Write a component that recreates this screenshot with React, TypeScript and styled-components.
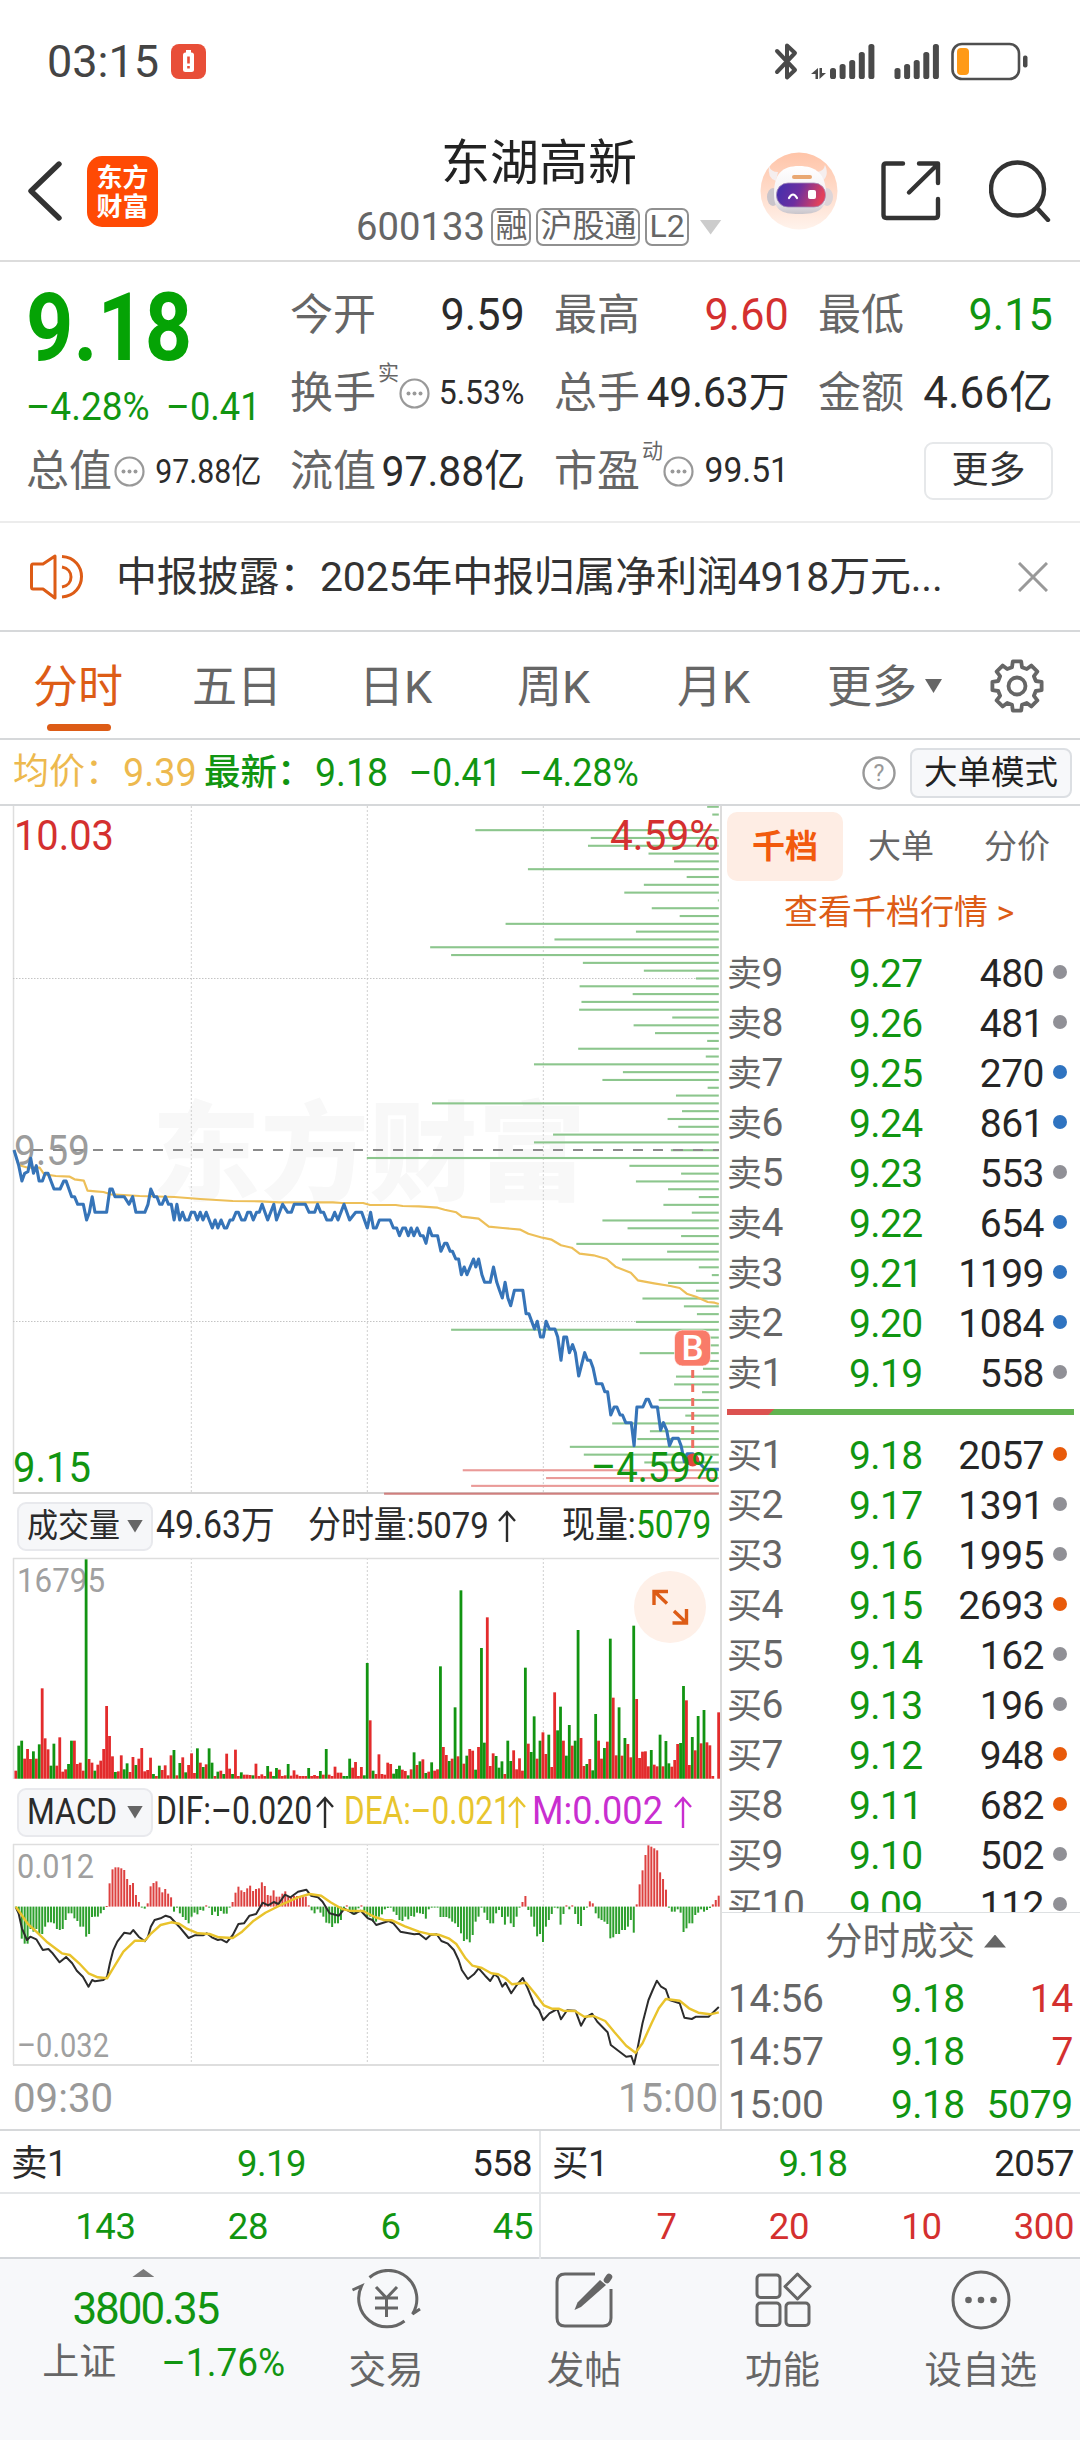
import React from 'react';
import styled, { createGlobalStyle } from 'styled-components';

const UP = '#d4302f';
const DOWN = '#119511';
const INK = '#2b2b2b';
const SUB = '#666666';
const ORANGE = '#dd5c16';
const LINE = '#d6d8da';

const Global = createGlobalStyle`
  * { box-sizing: border-box; }
  body {
    margin: 0;
    background: #fff;
    font-family: Roboto, "Noto Sans CJK SC", sans-serif;
    color: ${INK};
  }
  svg { display: block; flex: none; }
`;

const Page = styled.main`
  width: 1080px;
  height: 2440px;
  display: flex;
  flex-direction: column;
  overflow: hidden;
  background: #fff;
`;

/* A run of text narrowed horizontally inside a fixed-width slot. */
const Run = styled.span<{ $w?: number; $k?: number; $size?: number; $color?: string; $weight?: number; $end?: boolean }>`
  display: block;
  flex: none;
  width: ${(p) => (p.$w ? `${p.$w}px` : 'auto')};
  white-space: nowrap;
  line-height: 1.2;
  ${(p) => p.$size && `font-size: ${p.$size}px;`}
  ${(p) => p.$color && `color: ${p.$color};`}
  ${(p) => p.$weight && `font-weight: ${p.$weight};`}
  transform: scaleX(${(p) => p.$k ?? 1});
  transform-origin: ${(p) => (p.$end ? '100%' : '0')} 50%;
`;

/* ---------- status bar ---------- */

const StatusBar = styled.div`
  height: 120px;
  flex: none;
  padding: 3px 52px 0 47px;
  display: flex;
  align-items: center;
  justify-content: space-between;
`;
const StatusLeft = styled.div`
  display: flex;
  align-items: center;
  gap: 12px;
`;
const Clock = styled.span`
  font-size: 45px;
  line-height: 52px;
  color: #444;
  width: 112px;
`;

const SignalBars = ({ x }: { x: number }) => (
  <>
    {[67, 63, 59, 51, 43].map((top, i) => (
      <rect key={top} x={x + i * 9.6} y={top} width="6" height={78 - top} rx="2.6" fill="#4a4a4a" />
    ))}
  </>
);

const StatusIcons = () => (
  <svg width="254" height="40" viewBox="774 41 254 40">
    <path d="M777 50 L795 69 L787 76.500 V44.500 L795 52 L777 71" fill="none" stroke="#4a4a4a" strokeWidth="4" strokeLinejoin="round" strokeLinecap="round" />
    <path d="M811 73 L818 67 V78 H815.500 V73 Z M826 72 L819.500 78 V67 H822 V72 Z" fill="#4a4a4a" />
    <SignalBars x={830} />
    <SignalBars x={894.5} />
    <rect x="952.500" y="43" width="66.500" height="35" rx="9.500" fill="none" stroke="#4f4f4f" strokeWidth="2.600" />
    <rect x="957" y="47" width="12" height="27" rx="4" fill="#ff9a17" />
    <rect x="1023" y="54.500" width="4.500" height="12" rx="2" fill="#4a4a4a" />
  </svg>
);

/* ---------- header ---------- */

const Header = styled.header`
  height: 142px;
  flex: none;
  display: grid;
  grid-template-columns: 1fr auto 1fr;
  align-items: center;
  border-bottom: 2px solid #dcdcdc;
  padding: 2px 29px 0 27px;
`;
const HeaderLeft = styled.div`
  display: flex;
  align-items: center;
  gap: 24px;
`;
const Logo = styled.div`
  width: 71px;
  height: 71px;
  border-radius: 15px;
  background: #ff4a04;
  color: #fff;
  font-family: "Noto Sans CJK SC", sans-serif;
  font-weight: 700;
  font-size: 26px;
  line-height: 29px;
  text-align: center;
  padding-top: 5px;
`;
const TitleBlock = styled.div`
  display: flex;
  flex-direction: column;
  align-items: center;
  padding-top: 8px;
`;
const StockName = styled.h1`
  margin: 0;
  font-size: 49px;
  line-height: 64px;
  font-weight: 400;
  color: #222;
`;
const CodeRow = styled.div`
  display: flex;
  align-items: center;
  gap: 5px;
  height: 62px;
  color: ${SUB};
`;
const Tag = styled.span`
  height: 38px;
  border: 2px solid #909090;
  border-radius: 7px;
  padding: 0 2px;
  font-size: 32px;
  line-height: 33px;
`;
const HeaderRight = styled.div`
  display: flex;
  justify-content: flex-end;
  align-items: center;
`;

const Robot = () => (
  <svg width="78" height="78" viewBox="0 0 78 78">
    <defs>
      <linearGradient id="halo" x1="0" y1="0" x2="0" y2="1">
        <stop offset="0" stopColor="#ffc4a8" />
        <stop offset="1" stopColor="#fff3ec" />
      </linearGradient>
      <linearGradient id="visor" x1="0" y1="0" x2="1" y2="0.2">
        <stop offset="0" stopColor="#3f2fae" />
        <stop offset="0.5" stopColor="#6c2fa0" />
        <stop offset="1" stopColor="#e2415c" />
      </linearGradient>
      <linearGradient id="shell" x1="0" y1="0" x2="0" y2="1">
        <stop offset="0" stopColor="#ffffff" />
        <stop offset="0.7" stopColor="#f1eef1" />
        <stop offset="1" stopColor="#c9c5cb" />
      </linearGradient>
    </defs>
    <circle cx="39" cy="39" r="38.500" fill="url(#halo)" />
    <path d="M9 14 Q11 20 18 20 L16 29 Q7 26 9 14 Z M65 13 Q64 19 57 20 L61 30 Q70 24 65 13 Z" fill="#f5eeee" />
    <ellipse cx="13" cy="45" rx="6" ry="9" fill="#c9c4ca" />
    <ellipse cx="67" cy="45" rx="6" ry="9" fill="#ddd5d8" />
    <path d="M14 42 C14 22 22 14 39 14 C56 14 66 22 66 42 C66 58 58 62 39 62 C21 62 14 58 14 42 Z" fill="url(#shell)" />
    <rect x="32" y="23" width="20" height="4" rx="2" fill="#e9a873" />
    <rect x="16.500" y="31" width="49" height="24" rx="11.500" fill="url(#visor)" stroke="#a58bb9" strokeWidth="0.800" />
    <path d="M29 46 Q33 39 37 46" fill="none" stroke="#fff" strokeWidth="2.200" strokeLinecap="round" />
    <rect x="48" y="38" width="8" height="9" rx="2" fill="#fff" />
  </svg>
);

const ShareSvg = styled.svg`
  margin-left: 43px;
`;
const ShareIcon = () => (
  <ShareSvg width="60" height="60" viewBox="0 0 60 60">
    <path d="M22 2.500 H5 Q2.500 2.500 2.500 5 V54 Q2.500 57 5.500 57 H54 Q57 57 57 54 V38 M38 2.500 H57 V22 M56 4 L28 31.500" fill="none" stroke="#333" strokeWidth="4.400" strokeLinecap="round" strokeLinejoin="round" />
  </ShareSvg>
);

const SearchSvg = styled.svg`
  margin-left: 48px;
`;
const SearchIcon = () => (
  <SearchSvg width="62" height="62" viewBox="0 0 62 62">
    <circle cx="28.500" cy="29" r="26.500" fill="none" stroke="#333" strokeWidth="4.400" />
    <path d="M48 48 L59 60" stroke="#333" strokeWidth="4.400" strokeLinecap="round" />
  </SearchSvg>
);

/* ---------- quote ---------- */

const Quote = styled.section`
  flex: none;
  height: 261px;
  padding: 14px 28px 0 26px;
  display: grid;
  grid-template-columns: repeat(4, 235px);
  grid-template-rows: repeat(3, 78px);
  column-gap: 29px;
  border-bottom: 2px solid #ececec;
`;
const LastPrice = styled.div`
  grid-row: 1 / span 2;
  display: flex;
  flex-direction: column;
  color: ${DOWN};
`;
const BigPrice = styled.div`
  height: 108px;
  padding-top: 2px;
  font-size: 95px;
  line-height: 100px;
  font-weight: 700;
  color: #05a305;
  transform: scaleX(0.87);
  transform-origin: 0 50%;
`;
const Changes = styled.div`
  display: flex;
  justify-content: space-between;
  align-items: center;
  height: 50px;
`;
const Stat = styled.div`
  display: flex;
  align-items: center;
  justify-content: space-between;
  font-size: 43px;
  line-height: 78px;
`;
const StatLabel = styled.div`
  display: flex;
  align-items: center;
  color: ${SUB};
  white-space: nowrap;
`;
const Sup = styled.sup`
  align-self: flex-start;
  font-size: 21px;
  line-height: 34px;
  margin: 2px -2px 0 2px;
  vertical-align: baseline;
`;
const StatValue = styled.div<{ $size: number; $color?: string; $k: number }>`
  font-size: ${(p) => p.$size}px;
  color: ${(p) => p.$color ?? INK};
  white-space: nowrap;
  transform: scaleX(${(p) => p.$k});
  transform-origin: 100% 50%;
  margin-left: -20px;
`;
const MoreCell = styled.div`
  display: flex;
  align-items: center;
  justify-content: flex-end;
`;
const MoreButton = styled.button`
  font: inherit;
  font-size: 37px;
  line-height: 50px;
  width: 129px;
  height: 58px;
  padding: 0;
  color: #333;
  background: #fff;
  border: 2px solid #e6e8ea;
  border-radius: 9px;
`;

const Dots = () => (
  <svg width="33" height="31" viewBox="-2 0 33 31">
    <circle cx="15.500" cy="15.500" r="14" fill="none" stroke="#999" strokeWidth="2.200" />
    <circle cx="9.500" cy="15.500" r="2" fill="#999" />
    <circle cx="15.500" cy="15.500" r="2" fill="#999" />
    <circle cx="21.500" cy="15.500" r="2" fill="#999" />
  </svg>
);

type StatInfo = { label: string; value: string; size: number; k?: number; color?: string; sup?: string; dots?: boolean };

const StatCell = ({ label, value, size, k = 0.96, color, sup, dots }: StatInfo) => (
  <Stat>
    <StatLabel>
      {label}
      {sup && <Sup>{sup}</Sup>}
      {dots && <Dots />}
    </StatLabel>
    <StatValue $size={size} $color={color} $k={k}>{value}</StatValue>
  </Stat>
);

/* ---------- notice ---------- */

const Notice = styled.div`
  flex: none;
  height: 109px;
  display: flex;
  align-items: center;
  padding: 0 32px 0 30px;
  border-bottom: 2px solid ${LINE};
`;
const NoticeText = styled.span`
  flex: 1;
  margin-left: 31px;
  font-size: 41px;
  line-height: 56px;
  letter-spacing: -0.2px;
  color: #333;
  white-space: nowrap;
`;

/* ---------- period tabs ---------- */

const Tabs = styled.nav`
  flex: none;
  height: 108px;
  position: relative;
  display: flex;
  align-items: center;
  padding: 2px 36px 0 33px;
  border-bottom: 2px solid ${LINE};
`;
const Tab = styled.div<{ $w: number; $active?: boolean }>`
  width: ${(p) => p.$w}px;
  height: 100%;
  display: flex;
  flex-direction: column;
  justify-content: center;
  padding-top: 3px;
  font-size: 45px;
  line-height: 60px;
  color: ${(p) => (p.$active ? ORANGE : SUB)};
`;
const Underline = styled.i`
  position: absolute;
  left: 47px;
  bottom: 7px;
  width: 64px;
  height: 7px;
  border-radius: 4px;
  background: ${ORANGE};
`;
const Caret = styled.i<{ $w: number; $h: number; $color?: string; $up?: boolean }>`
  flex: none;
  width: ${(p) => p.$w}px;
  height: ${(p) => p.$h}px;
  background: ${(p) => p.$color ?? SUB};
  clip-path: ${(p) => (p.$up ? 'polygon(50% 0, 100% 100%, 0 100%)' : 'polygon(0 0, 100% 0, 50% 100%)')};
`;
const CodeCaret = styled(Caret)`
  margin-left: 6px;
`;
const Gear = () => {
  const pts: string[] = [];
  for (let i = 0; i < 8; i++) {
    const a = (i * Math.PI) / 4 - Math.PI / 2;
    [[-0.26, 19.5], [-0.17, 25], [0.17, 25], [0.26, 19.5]].forEach(([d, r]) =>
      pts.push(`${(27 + r * Math.cos(a + d)).toFixed(1)},${(27 + r * Math.sin(a + d)).toFixed(1)}`));
  }
  return (
    <svg width="54" height="54" viewBox="0 0 54 54">
      <polygon points={pts.join(' ')} fill="none" stroke={SUB} strokeWidth="3.800" strokeLinejoin="round" />
      <circle cx="27" cy="27" r="8.500" fill="none" stroke={SUB} strokeWidth="3.800" />
    </svg>
  );
};

/* ---------- average line ---------- */

const Summary = styled.div`
  flex: none;
  height: 66px;
  display: flex;
  align-items: center;
  padding: 2px 8px 0 13px;
  border-bottom: 2px solid ${LINE};
`;
const ModeButton = styled.button`
  font: inherit;
  width: 162px;
  height: 50px;
  margin-left: 14px;
  padding: 0;
  font-size: 33.5px;
  line-height: 44px;
  color: #222;
  background: #f7f8fa;
  border: 2px solid #dcdfe3;
  border-radius: 8px;
`;
const Spacer = styled.div`
  flex: 1;
`;

/* ---------- charts ---------- */

const Board = styled.section`
  flex: none;
  height: 1325px;
  display: flex;
  border-bottom: 2px solid ${LINE};
`;
const ChartColumn = styled.div`
  width: 722px;
  flex: none;
  border-right: 2px solid #dcdcdc;
  display: flex;
  flex-direction: column;
`;
const Legend = styled.div`
  height: 62px;
  flex: none;
  display: flex;
  align-items: center;
  padding-left: 17px;
  font-size: 37px;
`;
const Picker = styled.div`
  flex: none;
  width: 136px;
  height: 49px;
  margin-right: 3px;
  padding: 0 8px 0 8px;
  display: flex;
  align-items: center;
  justify-content: space-between;
  background: #f6f7f9;
  border: 2px solid #e8e9ed;
  border-radius: 9px;
`;
const TimeAxis = styled.div`
  flex: 1;
  display: flex;
  align-items: center;
  justify-content: space-between;
  padding: 2px 2px 0 13px;
  font-size: 41px;
  color: #999;
`;

const SX = 730 / 1568;
const STEP = 6.29;
const RIGHT = 718.8;
const trace = (data: string, top: number) =>
  data.trim().split(/\s+/).map((p) => {
    const [x, y] = p.split(',').map(Number);
    return `${(x * SX).toFixed(1)},${(top + y / 3).toFixed(1)}`;
  }).join(' ');

const depth = `25 14 0 523 275 281 151 96 410 69 161 203 2 144 84 458 178 353 620 575 292 161 49 299 185 295 300 100 183 137 25
302 28 397 206 250 24 92 616 79 110 87 356 397 103 756 192 81 178 109 43 119 58 250 196 81 306 111 208 43 15 109 49 164 75 47
178 575 20 20 170 20 34 92 96 36 129 129 72 229 148 175 320 290 160 550 371 532 719`.split(/\s+/).map(Number);

const price = `30,30 40,75 47,123 53,100 60,95 66,55 72,100 78,77 84,123 91,123 97,100 103,100 116,147 129,147 137,123 142,123
154,170 160,170 167,193 179,193 186,240 192,217 198,170 204,217 229,217 236,147 241,147 247,170 267,170 277,193 285,170
292,217 311,217 318,193 324,147 331,170 337,170 343,193 348,193 355,170 362,193 368,193 374,240 380,193 386,240 392,217
398,240 405,240 411,217 418,217 424,240 430,217 436,240 443,217 456,264 462,240 468,264 475,240 482,264 487,264 494,240
500,240 507,217 512,217 519,240 526,240 532,217 538,217 544,240 551,217 557,217 563,193 575,240 588,193 594,240 607,193
618,217 626,217 632,193 656,193 664,217 676,217 682,193 689,217 695,217 702,240 712,240 719,217 726,240 739,193 751,240
764,217 777,217 789,264 796,217 802,264 808,264 815,240 838,240 845,264 852,264 858,287 865,264 871,264 877,287 883,264
889,287 896,264 903,287 909,287 915,310 922,264 928,287 940,287 947,334 955,310 960,310 967,334 972,334 979,357 985,357
991,404 997,381 1003,404 1017,357 1022,381 1028,357 1035,404 1041,427 1053,427 1060,381 1067,427 1073,451 1079,474
1085,427 1091,474 1097,497 1105,451 1123,451 1130,521 1136,521 1148,567 1154,544 1161,591 1167,591 1173,544 1180,567
1192,567 1198,591 1205,661 1211,591 1217,591 1223,638 1230,614 1236,638 1243,708 1256,638 1262,661 1268,661 1274,684
1281,731 1293,731 1299,755 1305,755 1312,825 1319,801 1325,801 1332,825 1337,825 1344,848 1356,848 1362,917 1368,801
1381,801 1388,778 1393,778 1400,801 1412,801 1419,871 1425,848 1432,871 1438,917 1445,895 1457,895 1463,917 1470,965
1476,941 1488,941 1500,965 1515,988 1544,988`;

const average = `30,30 40,75 60,83 85,83 95,103 120,108 150,110 160,118 180,122 188,152 205,154 222,156 238,163 265,165
300,168 375,171 430,177 500,183 560,184 600,187 715,187 735,189 780,189 795,195 850,195 865,198 900,199 940,203 955,209
980,217 992,230 1028,236 1050,260 1080,264 1118,269 1135,281 1165,293 1185,299 1205,316 1228,323 1245,341 1275,346
1303,357 1322,380 1355,398 1370,421 1405,430 1440,438 1460,444 1475,461 1495,470 1520,486 1535,488 1544,492`;

const volume = `r812 g737 g722 r776 r747 r777 g754 r776 g733 r565 r715 r748 g797 g731 r797 r712 r815 r808 g792 g722 r722 r792
r788 r812 g178 r777 r788 g812 r794 r782 r747 r618 r708 r769 g816 r814 r766 g808 g790 r816 r771 g795 r776 r744 r814 r810 r773
g822 r828 g797 r810 r796 r826 r766 g750 r826 g789 r772 g817 r795 r760 r819 g745 r788 g801 r793 g745 g788 r828 g815 r812 g822
r761 r806 g822 r749 r828 g817 r824 r824 r825 g826 r791 r828 r823 r828 g798 r815 g828 g804 r809 r828 r826 g792 r827 r811 r824
r828 r828 r828 g804 r828 r825 r828 g813 r824 g747 r824 r828 r800 r818 r818 g828 g828 g776 r803 r786 r828 r801 g826 g489 r661
g812 r822 r763 r822 r824 r788 r792 g821 g807 g797 r809 r813 g826 r808 g757 r795 g784 r778 g819 r815 g787 r812 r808 g499 r741
r765 g783 r776 g622 r769 g271 r791 g767 r747 r752 g809 r741 g444 g728 r352 r798 r760 g768 g803 g784 r822 g722 g783 r751 r808
r775 r812 g503 r731 g756 g649 r776 g722 r697 r762 g704 r801 r577 g691 g620 r722 g767 g675 r737 g722 g390 r714 r798 g792 r777
g811 g642 r722 r776 g744 r725 g416 r593 r766 g622 r767 g714 r732 r772 g377 r597 r774 r755 r754 r799 g750 r794 r799 g704 r799
g723 g790 r800 r780 r732 g729 g558 r601 r795 g711 r751 g648 r730 g630 r727 r736 r828 r836 r637`.split(/\s+/);

const histogram = `384 400 476 491 491 447 455 447 462 462 440 427 427 430 447 450 447 420 400 400 415 423 440 440 470 462 411
410 410 400 390 378 310 268 262 262 265 270 297 315 309 345 366 380 386 370 319 309 304 322 337 327 341 352 395 383 400 411
420 430 410 398 403 390 392 376 383 405 395 408 393 401 401 380 366 338 320 331 336 325 317 333 327 325 307 318 345 347 331
350 350 341 334 350 350 348 348 348 348 350 376 391 400 388 398 410 428 430 441 430 430 420 390 376 390 403 403 385 376 392
410 410 425 425 410 403 388 384 383 395 405 420 423 410 418 408 410 398 400 402 416 388 383 382 382 411 411 411 415 425 430
441 460 483 478 487 465 425 410 383 398 420 430 430 400 390 411 434 410 430 441 410 383 366 348 390 410 440 469 462 486 440
420 402 383 385 434 402 376 388 376 402 432 438 390 381 364 370 400 415 420 425 432 475 472 462 462 450 450 440 420 458 373
313 271 225 196 200 205 211 277 297 329 383 395 395 388 398 456 445 430 430 405 398 388 395 390 384 373 360 347`.split(/\s+/).map(Number);

const dif = `34,382 40,400 47,445 58,480 65,470 78,478 92,510 104,507 112,518 128,547 142,531 155,550 165,572 178,590 190,620
198,600 204,604 222,600 230,590 236,550 243,512 252,485 267,458 280,461 286,450 298,470 311,484 318,470 324,440 332,420
345,415 356,407 366,412 375,425 385,440 398,462 405,474 418,466 436,466 444,460 455,472 468,480 475,478 487,487 500,465
512,432 524,430 536,407 550,402 564,368 576,376 588,366 598,372 612,344 624,352 640,335 658,329 668,347 683,352 693,365
708,400 728,407 740,386 760,402 775,392 790,415 800,420 808,435 835,423 845,430 860,455 890,463 900,461 915,478 925,465
938,463 948,483 962,491 975,510 985,540 992,570 1005,597 1018,583 1028,565 1042,587 1053,603 1062,583 1070,592 1079,620
1086,608 1098,640 1110,615 1123,594 1132,620 1148,675 1158,690 1167,720 1180,700 1197,687 1205,718 1218,691 1236,692
1248,737 1258,712 1272,701 1283,725 1305,757 1312,795 1328,812 1345,830 1356,828 1362,853 1368,815 1380,730 1393,660
1402,630 1411,602 1420,620 1430,628 1438,660 1460,670 1470,713 1486,717 1495,710 1522,710 1544,681`;

const dea = `34,380 45,402 60,432 78,455 100,485 133,520 150,525 170,550 190,580 210,592 230,595 240,572 265,515 290,482 311,482
325,460 345,435 368,427 385,431 400,445 425,460 450,462 470,472 500,474 520,455 545,422 570,398 600,377 640,352 665,342
690,347 710,367 735,387 750,392 780,393 805,411 825,420 842,421 870,439 900,455 925,463 942,464 965,476 980,492 1000,535
1015,557 1035,564 1055,580 1070,583 1085,594 1100,613 1130,608 1150,642 1168,676 1185,686 1200,686 1210,692 1235,693
1255,710 1275,708 1300,723 1320,757 1345,797 1365,818 1380,790 1400,728 1415,685 1430,657 1460,662 1480,685 1500,698
1525,703 1544,697`;

const Mark = ({ x, y, w, size, fill, children }: { x: number; y: number; w: number; size: number; fill: string; children: string }) => (
  <text x={x} y={y} fontSize={size} fill={fill} textLength={w} lengthAdjust="spacingAndGlyphs">{children}</text>
);

const Frame = ({ top, bottom }: { top: number; bottom: number }) => (
  <>
    {[191.3, 367.3, 543.3].map((x) => (
      <line key={x} x1={x} x2={x} y1={top} y2={bottom} stroke="#cfcfcf" strokeDasharray="2 2" />
    ))}
    <line x1="13.500" x2="13.500" y1={top} y2={bottom} stroke="#dedede" strokeWidth="1.500" />
  </>
);

const PriceChart = () => (
  <svg width="720" height="689" viewBox="0 806 720 689">
    <text x="152" y="1192" fontSize="108" fontWeight="900" fontFamily="Noto Sans CJK SC" fill="#f8f8f8" textLength="434">东方财富</text>
    <Frame top={806} bottom={1494} />
    <path d="M13 978.500 H719 M13 1321.500 H719" stroke="#c4c4c4" strokeDasharray="1.500 1.500" />
    <path d="M13 1493 H719" stroke="#d6d6d6" strokeWidth="2" />
    {depth.map((v, k) => (
      <rect key={k} x={RIGHT - v * SX} y={805.7 + 7.806 * k} width={v * SX} height="2.100" fill={k < 85 ? '#8cc68d' : k < 88 ? '#ea9a98' : '#cf7f7d'} />
    ))}
    <Mark x={14} y={1165} w={76} size={42} fill="#9c9c9c">9.59</Mark>
    <path d="M33 1150 H719" stroke="#8a8a8a" strokeWidth="2" strokeDasharray="10 10" />
    <polyline points={trace(average, 1140)} fill="none" stroke="#edbf58" strokeWidth="2.200" strokeLinejoin="round" />
    <polyline points={trace(price, 1140)} fill="none" stroke="#3674b8" strokeWidth="3.100" strokeLinejoin="round" />
    <path d="M692.700 1370 V1452" stroke="#ee6f61" strokeWidth="3" strokeDasharray="8 6" />
    <circle cx="692.700" cy="1460" r="6.500" fill="#e2473d" />
    <rect x="674.500" y="1330" width="36" height="36" rx="8" fill="#f97b69" stroke="#fff" strokeOpacity="0.600" />
    <text x="692.500" y="1360" fontSize="35" fontWeight="500" fill="#fff" textAnchor="middle">B</text>
    <Mark x={14} y={850} w={100} size={42} fill={UP}>10.03</Mark>
    <Mark x={610} y={850} w={109} size={42} fill={UP}>4.59%</Mark>
    <Mark x={13} y={1482} w={78} size={42} fill={DOWN}>9.15</Mark>
    <Mark x={591} y={1482} w={128} size={42} fill={DOWN}>–4.59%</Mark>
  </svg>
);

const VolumeChart = () => (
  <svg width="720" height="224" viewBox="0 1557 720 224">
    <Frame top={1558} bottom={1779} />
    <path d="M13 1558.500 H719" stroke="#dedede" strokeWidth="1.500" />
    <Mark x={17} y={1592} w={88} size={33} fill="#a0a0a0">16795</Mark>
    {volume.map((v, i) => {
      const top = 1500 + Number(v.slice(1)) / 3;
      return <rect key={i} x={(34 + i * STEP) * SX - 1.4} y={top} width="2.800" height={1778.7 - top} fill={v[0] === 'r' ? '#e32b2c' : '#129412'} />;
    })}
    <circle cx="670" cy="1607" r="36" fill="#fef0e8" />
    <path d="M654 1605 V1591.500 H668 M655 1592 L667 1603.500 M672.500 1623 H686.500 V1609 M685.500 1622 L674 1611" fill="none" stroke={ORANGE} strokeWidth="3.400" />
  </svg>
);

const MacdChart = () => (
  <svg width="720" height="224" viewBox="0 1843 720 224">
    <Frame top={1844} bottom={2065} />
    <path d="M13 1844.500 H719" stroke="#dedede" strokeWidth="1.500" />
    <path d="M13 2065 H719" stroke="#dedede" strokeWidth="2" />
    {histogram.map((v, i) => {
      const y = 1780 + v / 3;
      const zero = 1906.6;
      return <rect key={i} x={(34 + (i * STEP * 240) / (histogram.length - 1)) * SX - 0.95} y={Math.min(y, zero)} width="2" height={Math.max(Math.abs(y - zero), 1)} fill={y < zero ? '#dd4140' : '#2d9f2d'} />;
    })}
    <Mark x={17} y={1878} w={77} size={33} fill="#a0a0a0">0.012</Mark>
    <Mark x={17} y={2057} w={92} size={33} fill="#a0a0a0">–0.032</Mark>
    <polyline points={trace(dif, 1780)} fill="none" stroke="#2c2c2c" strokeWidth="2" strokeLinejoin="round" />
    <polyline points={trace(dea, 1780)} fill="none" stroke="#e9c32c" strokeWidth="2.400" strokeLinejoin="round" />
  </svg>
);

const RiseArrow = ({ color = INK }: { color?: string }) => (
  <svg width="18" height="33" viewBox="0 0 18 33">
    <path d="M9 32 V2 M1 11 L9 2 L17 11" fill="none" stroke={color} strokeWidth="2.400" />
  </svg>
);

/* ---------- order book ---------- */

const Book = styled.div`
  flex: 1;
  display: flex;
  flex-direction: column;
`;
const BookTabs = styled.div`
  height: 75px;
  flex: none;
  display: flex;
  padding: 6px 0 0 5px;
`;
const BookTab = styled.div<{ $active?: boolean }>`
  width: 116px;
  height: 69px;
  border-radius: 10px;
  text-align: center;
  font-size: 33px;
  line-height: 69px;
  color: ${(p) => (p.$active ? '#f25a0d' : SUB)};
  font-weight: ${(p) => (p.$active ? 700 : 400)};
  background: ${(p) => (p.$active ? '#feede4' : 'transparent')};
`;
const BookLink = styled.div`
  height: 67px;
  flex: none;
  padding-left: 62px;
  font-size: 34px;
  line-height: 63px;
  color: ${ORANGE};
  white-space: nowrap;
`;
const Levels = styled.div<{ $h: number }>`
  flex: none;
  height: ${(p) => p.$h}px;
  overflow: hidden;
`;
const Level = styled.div`
  height: 50px;
  display: grid;
  grid-template-columns: 122px 74px 1fr 31px;
  align-items: center;
  padding: 0 5px 0 5px;
  font-size: 39px;
  line-height: 51px;
  letter-spacing: -0.5px;
`;
const Side = styled.span`
  color: ${SUB};
  white-space: nowrap;
  b { font-weight: 400; font-size: 35px; }
`;
const Price = styled.span`
  color: ${DOWN};
  white-space: nowrap;
  letter-spacing: -0.6px;
`;
const Amount = styled.span<{ $color?: string }>`
  text-align: right;
  color: ${(p) => p.$color ?? '#262626'};
`;
const Dot = styled.i<{ $c: string }>`
  width: 14px;
  height: 14px;
  margin: -5px 0 0 9px;
  border-radius: 50%;
  background: ${(p) => (p.$c === 'b' ? '#2f73c0' : p.$c === 'o' ? '#e85a0a' : '#909096')};
`;
const Balance = styled.div`
  flex: none;
  height: 6px;
  margin: 11px 6px 15px 5px;
  background: linear-gradient(135deg, #dc5250 0 33px, #62b350 34px);
`;
const DealHead = styled.div`
  flex: none;
  height: 60px;
  border-top: 1px solid #dde0e2;
  display: flex;
  align-items: center;
  justify-content: center;
  gap: 9px;
  padding: 0 0 3px 29px;
  font-size: 37.5px;
  line-height: 50px;
  color: ${SUB};
`;
const Deal = styled.div`
  height: 53px;
  flex: none;
  display: grid;
  grid-template-columns: 163px 74px 1fr;
  align-items: center;
  padding: 0 7px 0 6px;
  font-size: 39px;
  line-height: 50px;
  letter-spacing: -0.3px;
`;

type Row = [string, string, string, string];
const sells: Row[] = [
  ['9', '9.27', '480', 'g'], ['8', '9.26', '481', 'g'], ['7', '9.25', '270', 'b'],
  ['6', '9.24', '861', 'b'], ['5', '9.23', '553', 'g'], ['4', '9.22', '654', 'b'],
  ['3', '9.21', '1199', 'b'], ['2', '9.20', '1084', 'b'], ['1', '9.19', '558', 'g'],
];
const buys: Row[] = [
  ['1', '9.18', '2057', 'o'], ['2', '9.17', '1391', 'g'], ['3', '9.16', '1995', 'g'],
  ['4', '9.15', '2693', 'o'], ['5', '9.14', '162', 'g'], ['6', '9.13', '196', 'g'],
  ['7', '9.12', '948', 'o'], ['8', '9.11', '682', 'o'], ['9', '9.10', '502', 'g'], ['10', '9.09', '112', 'g'],
];
const BookLevel = ({ side, row }: { side: string; row: Row }) => (
  <Level>
    <Side><b>{side}</b>{row[0]}</Side>
    <Price>{row[1]}</Price>
    <Amount>{row[2]}</Amount>
    <Dot $c={row[3]} />
  </Level>
);

/* ---------- queue ---------- */

const Queue = styled.section`
  flex: none;
  height: 128px;
  display: grid;
  grid-template-columns: 541px 539px;
  grid-template-rows: 63px 65px;
  border-bottom: 2px solid #d3d6da;
`;
const QueueTop = styled.div<{ $left?: boolean }>`
  display: grid;
  grid-template-columns: 1fr auto 1fr;
  align-items: center;
  padding: 4px ${(p) => (p.$left ? 7 : 6)}px 0 11px;
  font-size: 36.5px;
  line-height: 50px;
  letter-spacing: -0.6px;
  border-bottom: 2px solid #e4e6e8;
  border-right: ${(p) => (p.$left ? '2px solid #e4e6e8' : '0')};
`;
const QueueCells = styled.div<{ $color: string; $left?: boolean }>`
  display: grid;
  grid-template-columns: repeat(4, 132.5px);
  align-items: center;
  padding-left: 3px;
  text-align: right;
  font-size: 36.5px;
  line-height: 50px;
  letter-spacing: -0.4px;
  color: ${(p) => p.$color};
  border-right: ${(p) => (p.$left ? '2px solid #e4e6e8' : '0')};
`;

/* ---------- bottom bar ---------- */

const BottomBar = styled.footer`
  flex: 1;
  display: flex;
  background: #f7f8fa;
  color: ${SUB};
`;
const IndexBox = styled.div`
  width: 287px;
  padding-top: 10px;
  display: flex;
  flex-direction: column;
  align-items: center;
`;
const IndexRow = styled.div`
  display: flex;
  align-items: center;
  justify-content: space-between;
  width: 243px;
  height: 44px;
  font-size: 37px;
  margin-left: 41px;
`;
const IndexValue = styled.div`
  height: 64px;
  font-size: 44px;
  line-height: 65px;
  letter-spacing: -2px;
  margin-left: 4px;
  color: ${DOWN};
`;
const NavItem = styled.div`
  width: 198.5px;
  padding-top: 10px;
  display: flex;
  flex-direction: column;
  align-items: center;
  font-size: 37.5px;
  line-height: 50px;
  gap: 14px;
`;

const glyph = { fill: 'none', stroke: SUB, strokeWidth: 3 };
const TradeIcon = () => (
  <svg width="72" height="62" viewBox="0 0 72 62">
    <path d="M19.500 8.500 A28.500 28.500 0 0 1 62.500 45 L70 40" {...glyph} />
    <path d="M54.500 52 A28.500 28.500 0 0 1 11.500 17 L2.500 21" {...glyph} />
    <path d="M26 18 L36.500 29 L47 18 M25 29 H48 M25 39 H48 M36.500 29 V48" {...glyph} />
  </svg>
);
const PostIcon = () => (
  <svg width="60" height="62" viewBox="0 0 60 62">
    <path d="M41 5 H11 Q3 5 3 13 V49 Q3 57 11 57 H49 Q57 57 57 49 V20" {...glyph} />
    <path d="M46 11 L52 16 L27 38 L20.500 41 L23.500 33.500 Z" fill={SUB} />
    <path d="M53 11 L55 8" stroke={SUB} strokeWidth="6.500" strokeLinecap="round" />
  </svg>
);
const AppsIcon = () => (
  <svg width="60" height="62" viewBox="0 0 60 62">
    <rect x="4" y="6" width="23" height="22.500" rx="3.500" {...glyph} />
    <rect x="4" y="34" width="23" height="22.500" rx="3.500" {...glyph} />
    <rect x="33" y="34" width="23" height="22.500" rx="3.500" {...glyph} />
    <path d="M44.500 5 L57 17.500 L44.500 30 L32 17.500 Z" strokeLinejoin="round" {...glyph} />
  </svg>
);
const MoreIcon = () => (
  <svg width="62" height="62" viewBox="0 0 62 62">
    <circle cx="31" cy="31" r="28" {...glyph} />
    <circle cx="18.500" cy="31" r="3.300" fill={SUB} />
    <circle cx="31" cy="31" r="3.300" fill={SUB} />
    <circle cx="43.500" cy="31" r="3.300" fill={SUB} />
  </svg>
);

const Gap = styled.span<{ $w: number }>`
  flex: none;
  width: ${(p) => p.$w}px;
`;

export default function App() {
  return (
    <Page>
      <Global />
      <StatusBar>
        <StatusLeft>
          <Clock>03:15</Clock>
          <svg width="35" height="35" viewBox="0 0 35 35">
            <rect width="35" height="35" rx="8" fill="#e84e38" />
            <rect x="12" y="8.500" width="11" height="19.500" rx="2.500" fill="#fff" />
            <rect x="15" y="6" width="5" height="3" fill="#fff" />
            <path d="M17.500 12.500 V19.500 M17.500 22 V24.500" stroke="#e84e38" strokeWidth="2.600" />
          </svg>
        </StatusLeft>
        <StatusIcons />
      </StatusBar>

      <Header>
        <HeaderLeft>
          <svg width="36" height="60" viewBox="0 0 36 60">
            <path d="M32 3 L4 30 L32 57" fill="none" stroke="#333" strokeWidth="5.400" strokeLinejoin="round" strokeLinecap="round" />
          </svg>
          <Logo>东方<br />财富</Logo>
        </HeaderLeft>
        <TitleBlock>
          <StockName>东湖高新</StockName>
          <CodeRow>
            <Run $w={130} $size={39} $k={0.98}>600133</Run>
            <Tag>融</Tag>
            <Tag>沪股通</Tag>
            <Tag>L2</Tag>
            <CodeCaret $w={22} $h={15} $color="#cccccc" />
          </CodeRow>
        </TitleBlock>
        <HeaderRight>
          <Robot />
          <ShareIcon />
          <SearchIcon />
        </HeaderRight>
      </Header>

      <Quote>
        <LastPrice>
          <BigPrice>9.18</BigPrice>
          <Changes>
            <Run $w={125} $size={39} $k={0.95}>–4.28%</Run>
            <Run $size={39} $k={0.93} $end>–0.41</Run>
          </Changes>
        </LastPrice>
        <StatCell label="今开" value="9.59" size={45} />
        <StatCell label="最高" value="9.60" size={45} color={UP} />
        <StatCell label="最低" value="9.15" size={45} color={DOWN} />
        <StatCell label="换手" sup="实" dots value="5.53%" size={33} k={0.97} />
        <StatCell label="总手" value="49.63万" size={42} k={0.97} />
        <StatCell label="金额" value="4.66亿" size={44} k={1} />
        <StatCell label="总值" dots value="97.88亿" size={34} k={0.89} />
        <StatCell label="流值" value="97.88亿" size={43} k={0.95} />
        <StatCell label="市盈" sup="动" dots value="99.51" size={35} k={0.96} />
        <MoreCell><MoreButton>更多</MoreButton></MoreCell>
      </Quote>

      <Notice>
        <svg width="55" height="48" viewBox="0 0 55 48">
          <path d="M3 11 H13 L25 3 V45 L13 36 H3 Q1.500 36 1.500 34 V13 Q1.500 11 3 11 Z" fill="none" stroke={ORANGE} strokeWidth="3" strokeLinejoin="round" />
          <path d="M32 3.500 C58 5 58 42 32 44 M32 14 C44 16 44 32 32 34" fill="none" stroke={ORANGE} strokeWidth="3" />
        </svg>
        <NoticeText>中报披露：2025年中报归属净利润4918万元...</NoticeText>
        <svg width="30" height="30" viewBox="0 0 30 30">
          <path d="M1 1 L29 29 M29 1 L1 29" stroke="#999" strokeWidth="3" />
        </svg>
      </Notice>

      <Tabs>
        <Tab $w={159} $active>分时<Underline /></Tab>
        <Tab $w={167}>五日</Tab>
        <Tab $w={158}>日K</Tab>
        <Tab $w={160}>周K</Tab>
        <Tab $w={150}>月K</Tab>
        <Tab $w={98}>更多</Tab>
        <Caret $w={17} $h={14} />
        <Spacer />
        <Gear />
      </Tabs>

      <Summary>
        <Run $w={110} $size={36} $color="#edb94e">均价：</Run>
        <Run $w={81} $size={39} $color="#edb94e" $k={0.97}>9.39</Run>
        <Run $w={111} $size={36.5} $color={DOWN} $weight={500}>最新：</Run>
        <Run $w={94} $size={39} $color={DOWN} $k={0.96}>9.18</Run>
        <Run $w={110} $size={39} $color={DOWN} $k={0.91}>–0.41</Run>
        <Run $size={39} $color={DOWN} $k={0.92}>–4.28%</Run>
        <Spacer />
        <svg width="34" height="34" viewBox="0 0 34 34">
          <circle cx="17" cy="17" r="15.500" fill="none" stroke="#999" strokeWidth="2.400" />
          <text x="17" y="25" fontSize="23" textAnchor="middle" fill="#999">?</text>
        </svg>
        <ModeButton>大单模式</ModeButton>
      </Summary>

      <Board>
        <ChartColumn>
          <PriceChart />
          <Legend>
            <Picker><Run $w={95} $size={33} $k={0.94}>成交量</Run><Caret $w={16} $h={13} /></Picker>
            <Run $w={152} $size={38} $k={0.89}>49.63万</Run>
            <Run $w={186} $size={37} $k={0.89}>分时量:5079</Run>
            <Gap $w={4} />
            <RiseArrow />
            <Spacer />
            <Run $w={74} $size={37} $k={0.89}>现量:</Run>
            <Run $w={84} $size={38} $k={0.88} $color={DOWN}>5079</Run>
          </Legend>
          <VolumeChart />
          <Legend>
            <Picker><Run $w={95} $k={0.86}>MACD</Run><Caret $w={16} $h={13} /></Picker>
            <Run $w={157} $size={38} $k={0.84}>DIF:–0.020</Run>
            <Gap $w={3} />
            <RiseArrow />
            <Gap $w={10} />
            <Run $w={160} $size={38} $k={0.83} $color="#e8c52e">DEA:–0.021</Run>
            <Gap $w={4} />
            <RiseArrow color="#e8c52e" />
            <Gap $w={6} />
            <Run $w={142} $size={38} $k={0.95} $color="#c92ed0">M:0.002</Run>
            <RiseArrow color="#c92ed0" />
          </Legend>
          <MacdChart />
          <TimeAxis><Run $k={0.98}>09:30</Run><Run $k={0.98} $end>15:00</Run></TimeAxis>
        </ChartColumn>

        <Book>
          <BookTabs>
            <BookTab $active>千档</BookTab>
            <BookTab>大单</BookTab>
            <BookTab>分价</BookTab>
          </BookTabs>
          <BookLink>查看千档行情 &gt;</BookLink>
          <Levels $h={450}>{sells.map((r) => <BookLevel key={r[0]} side="卖" row={r} />)}</Levels>
          <Balance />
          <Levels $h={482}>{buys.map((r) => <BookLevel key={r[0]} side="买" row={r} />)}</Levels>
          <DealHead>分时成交<Caret $w={22} $h={13} $up /></DealHead>
          <Deal><Side>14:56</Side><Price>9.18</Price><Amount $color={UP}>14</Amount></Deal>
          <Deal><Side>14:57</Side><Price>9.18</Price><Amount $color={UP}>7</Amount></Deal>
          <Deal><Side>15:00</Side><Price>9.18</Price><Amount $color={DOWN}>5079</Amount></Deal>
        </Book>
      </Board>

      <Queue>
        <QueueTop $left><span>卖1</span><Price>9.19</Price><Amount>558</Amount></QueueTop>
        <QueueTop><span>买1</span><Price>9.18</Price><Amount>2057</Amount></QueueTop>
        <QueueCells $left $color={DOWN}><span>143</span><span>28</span><span>6</span><span>45</span></QueueCells>
        <QueueCells $color={UP}><span>7</span><span>20</span><span>10</span><span>300</span></QueueCells>
      </Queue>

      <BottomBar>
        <IndexBox>
          <Caret $w={22} $h={8} $up $color="#7a7a7a" />
          <IndexValue>3800.35</IndexValue>
          <IndexRow><Run>上证</Run><Run $size={39} $k={0.95} $color={DOWN} $end>–1.76%</Run></IndexRow>
        </IndexBox>
        <NavItem><TradeIcon />交易</NavItem>
        <NavItem><PostIcon />发帖</NavItem>
        <NavItem><AppsIcon />功能</NavItem>
        <NavItem><MoreIcon />设自选</NavItem>
      </BottomBar>
    </Page>
  );
}
